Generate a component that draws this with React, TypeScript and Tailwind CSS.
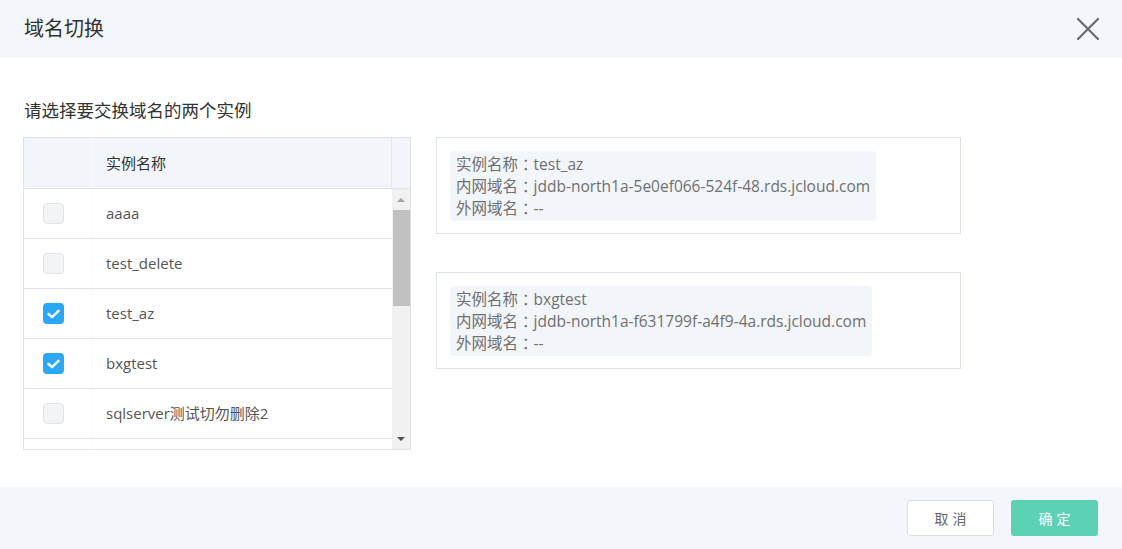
import React from "react";

const font = { fontFamily: '"Open Sans", "Noto Sans CJK SC", sans-serif' };

function Check({ on }: { on: boolean }) {
  if (on)
    return (
      <div className="w-[21px] h-[21px] rounded-[4px] bg-[#2aa8f6] flex items-center justify-center">
        <svg width="13" height="10" viewBox="0 0 13 10">
          <path d="M1.5 5 L5 8.2 L11.5 1.8" stroke="#fff" strokeWidth="2.4" fill="none" strokeLinecap="round" strokeLinejoin="round" />
        </svg>
      </div>
    );
  return <div className="w-[21px] h-[21px] rounded-[4px] bg-[#f3f4f6] border border-[#dfe4ea]" />;
}

const rows = [
  { name: "aaaa", on: false },
  { name: "test_delete", on: false },
  { name: "test_az", on: true },
  { name: "bxgtest", on: true },
  { name: "sqlserver测试切勿删除2", on: false },
  { name: "", on: false },
];

function Line({ label, value }: { label: string; value: string }) {
  return (
    <div className="h-[22px] flex items-center whitespace-nowrap">
      <span>{label}</span>
      <span style={{ fontFamily: '"Noto Sans CJK JP", sans-serif' }}>：</span>
      <span>{value}</span>
    </div>
  );
}

function Card({ name, domain }: { name: string; domain: string }) {
  return (
    <div className="w-[525px] h-[97px] border border-[#dde3ea] pl-[13px] pt-[13px]">
      <div className="inline-block bg-[#f2f5f9] rounded-[4px] px-[6px] py-[2px] text-[15.5px] leading-[22px] text-[#707070]">
        <Line label="实例名称" value={name} />
        <Line label="内网域名" value={domain} />
        <Line label="外网域名" value="--" />
      </div>
    </div>
  );
}

export default function App() {
  return (
    <div className="w-[1122px] h-[549px] bg-white flex flex-col" style={font}>
      <div className="h-[58px] bg-[#f3f6fa] flex items-center justify-between pl-6 pr-[22px] shrink-0">
        <div className="text-[20px] text-[#333]">域名切换</div>
        <svg width="24" height="24" viewBox="0 0 24 24">
          <path d="M2 2 L22 22 M22 2 L2 22" stroke="#6b6b6b" strokeWidth="2.2" strokeLinecap="round" />
        </svg>
      </div>
      <div className="h-[429px] px-6 pt-[40px] shrink-0">
        <div className="text-[17.5px] leading-[24px] text-[#333]">请选择要交换域名的两个实例</div>
        <div className="flex mt-[15px] gap-[25px] -ml-[1px]">
          <div className="w-[388px] h-[313px] border border-[#dde3ea] flex flex-col overflow-hidden">
            <div className="h-[51px] bg-[#f2f5f9] border-b border-[#dde3ea] flex shrink-0">
              <div className="w-[69px] border-r border-[#f9fbfd]" />
              <div className="flex-1 flex items-center pl-[13px] text-[15px] text-[#333] border-r border-[#e3e8ef]">实例名称</div>
              <div className="w-[18px]" />
            </div>
            <div className="flex flex-1 overflow-hidden">
              <div className="flex-1 overflow-hidden">
                {rows.map((r, i) => (
                  <div key={i} className="h-[50px] border-b border-[#dde3ea] flex items-center">
                    <div className="w-[69px] h-full flex items-center pl-[19px] border-r border-[#fafbfc]">
                      {r.name && <Check on={r.on} />}
                    </div>
                    <div className="pl-[13px] text-[15px] text-[#555]">{r.name}</div>
                  </div>
                ))}
              </div>
              <div className="w-[18px] bg-[#f1f1f1] flex flex-col items-center">
                <div className="h-[21px] flex items-center justify-center">
                  <div className="w-0 h-0 border-l-[4px] border-r-[4px] border-b-[4px] border-l-transparent border-r-transparent border-b-[#a3a3a3]" />
                </div>
                <div className="w-[17px] h-[96px] bg-[#c1c1c1]" />
                <div className="flex-1" />
                <div className="h-[21px] flex items-center justify-center">
                  <div className="w-0 h-0 border-l-[4px] border-r-[4px] border-t-[4px] border-l-transparent border-r-transparent border-t-[#505050]" />
                </div>
              </div>
            </div>
          </div>
          <div className="flex flex-col gap-[38px]">
            <Card name="test_az" domain="jddb-north1a-5e0ef066-524f-48.rds.jcloud.com" />
            <Card name="bxgtest" domain="jddb-north1a-f631799f-a4f9-4a.rds.jcloud.com" />
          </div>
        </div>
      </div>
      <div className="flex-1 bg-[#f3f6fa] flex items-center justify-end gap-[17px] pr-6">
        <button className="w-[87px] h-[36px] bg-white border border-[#d9e0e8] rounded-[3px] text-[14px] text-[#666] tracking-[4px] pl-[4px]">取消</button>
        <button className="w-[87px] h-[36px] bg-[#5dd1b3] rounded-[3px] text-[14px] text-white tracking-[4px] pl-[4px]">确定</button>
      </div>
    </div>
  );
}
